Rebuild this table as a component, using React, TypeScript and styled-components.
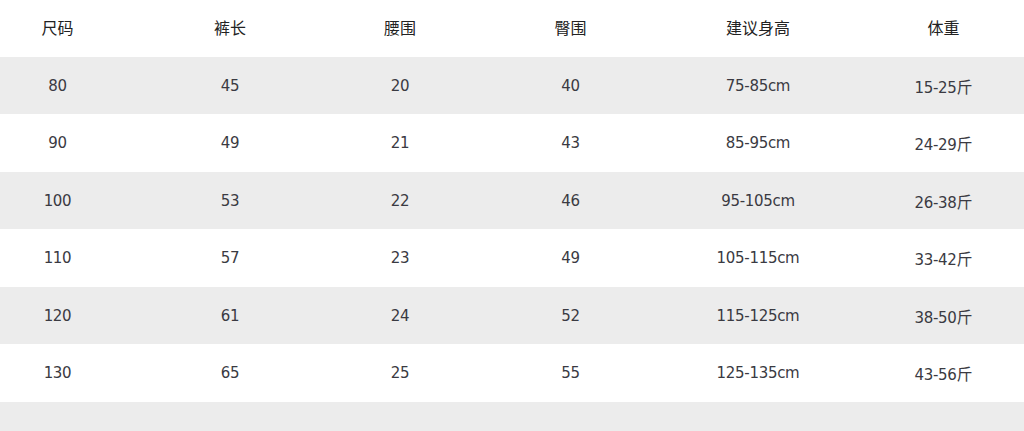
import React from "react";
import styled, { createGlobalStyle } from "styled-components";

const GlobalStyle = createGlobalStyle`
  html, body {
    margin: 0;
    padding: 0;
    background: #ffffff;
    overflow: hidden;
  }
  body {
    font-family: "DejaVu Sans", "Noto Sans CJK SC", sans-serif;
    color: #333;
  }
`;

const Table = styled.div`
  width: 1024px;
  display: flex;
  flex-direction: column;
  overflow: hidden;
`;

const Row = styled.div<{ $shade: boolean; $h: number }>`
  display: grid;
  grid-template-columns: 115px 230px 110px 231px 144px 227px;
  align-items: center;
  justify-items: center;
  height: ${(p) => p.$h}px;
  background: ${(p) => (p.$shade ? "#ececec" : "#ffffff")};
`;

const HeadCell = styled.div`
  font-family: "Noto Sans CJK SC", sans-serif;
  font-size: 16px;
  font-weight: 400;
  color: #222;
  white-space: nowrap;
  margin-bottom: 3px;
`;

const Cell = styled.div`
  font-family: "DejaVu Sans", "Noto Sans CJK SC", sans-serif;
  font-size: 15px;
  letter-spacing: -0.3px;
  color: #3a3a42;
  white-space: nowrap;
  display: flex;
  align-items: baseline;
`;

const Jin = styled.span`
  font-family: "Noto Sans CJK SC", sans-serif;
  font-size: 16px;
  letter-spacing: 0;
`;

const headers = ["尺码", "裤长", "腰围", "臀围", "建议身高", "体重"];

const rows: [string, string, string, string, string, string][] = [
  ["80", "45", "20", "40", "75-85cm", "15-25"],
  ["90", "49", "21", "43", "85-95cm", "24-29"],
  ["100", "53", "22", "46", "95-105cm", "26-38"],
  ["110", "57", "23", "49", "105-115cm", "33-42"],
  ["120", "61", "24", "52", "115-125cm", "38-50"],
  ["130", "65", "25", "55", "125-135cm", "43-56"],
];

export default function App() {
  return (
    <>
      <GlobalStyle />
      <Table>
        <Row $shade={false} $h={57}>
          {headers.map((h) => (
            <HeadCell key={h}>{h}</HeadCell>
          ))}
        </Row>
        {rows.map((r, i) => (
          <Row key={r[0]} $shade={i % 2 === 0} $h={i % 2 === 0 ? 57 : 58}>
            {r.slice(0, 5).map((v, j) => (
              <Cell key={j}>{v}</Cell>
            ))}
            <Cell>
              {r[5]}
              <Jin>斤</Jin>
            </Cell>
          </Row>
        ))}
        <Row $shade={true} $h={29} />
      </Table>
    </>
  );
}
